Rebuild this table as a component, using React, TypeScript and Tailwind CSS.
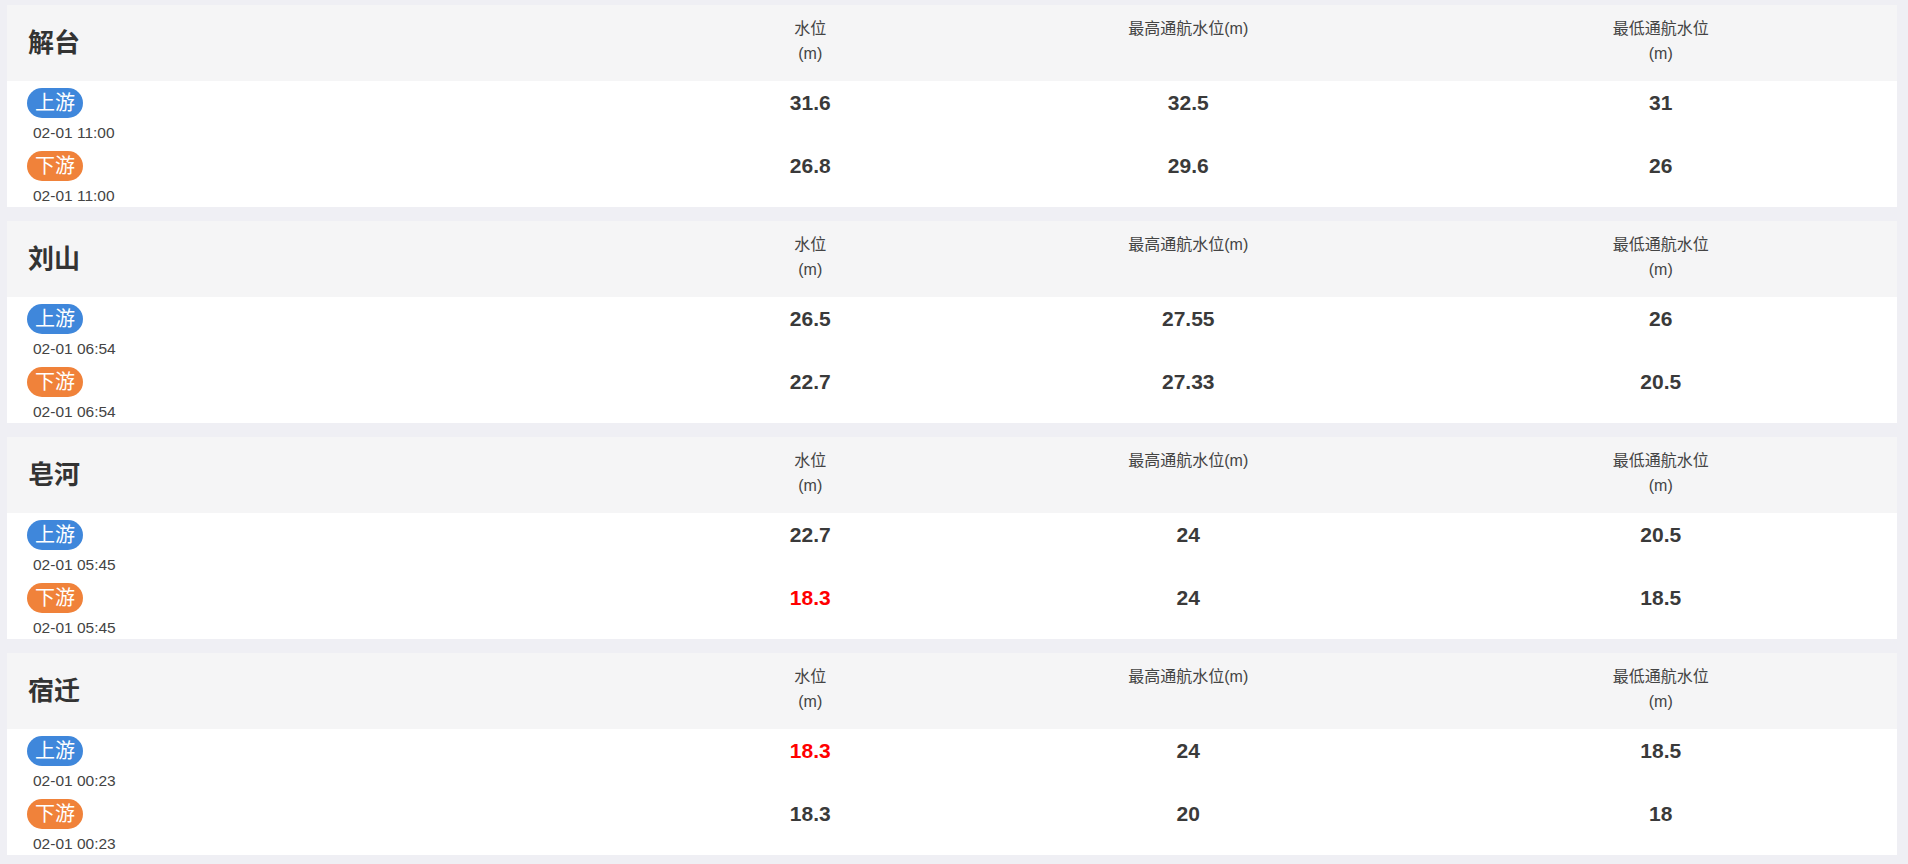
const stations = [
  {
    name: "解台",
    rows: [
      { side: "上游", time: "02-01 11:00", level: "31.6", max: "32.5", min: "31", warn: false },
      { side: "下游", time: "02-01 11:00", level: "26.8", max: "29.6", min: "26", warn: false },
    ],
  },
  {
    name: "刘山",
    rows: [
      { side: "上游", time: "02-01 06:54", level: "26.5", max: "27.55", min: "26", warn: false },
      { side: "下游", time: "02-01 06:54", level: "22.7", max: "27.33", min: "20.5", warn: false },
    ],
  },
  {
    name: "皂河",
    rows: [
      { side: "上游", time: "02-01 05:45", level: "22.7", max: "24", min: "20.5", warn: false },
      { side: "下游", time: "02-01 05:45", level: "18.3", max: "24", min: "18.5", warn: true },
    ],
  },
  {
    name: "宿迁",
    rows: [
      { side: "上游", time: "02-01 00:23", level: "18.3", max: "24", min: "18.5", warn: true },
      { side: "下游", time: "02-01 00:23", level: "18.3", max: "20", min: "18", warn: false },
    ],
  },
];

const cols = "grid grid-cols-[35%_15%_25%_25%]";

function StationCard({ station }: { station: (typeof stations)[number] }) {
  return (
    <div className="bg-white">
      <div className={`${cols} h-[76px] bg-[#f5f5f6] text-[16px] leading-[25px] text-[#444]`}>
        <div className="flex items-center pl-[21px] text-[26px] font-bold text-[#333]">{station.name}</div>
        <div className="pt-[11px] text-center">
          水位
          <br />
          (m)
        </div>
        <div className="pt-[11px] text-center">最高通航水位(m)</div>
        <div className="pt-[11px] text-center">
          最低通航水位
          <br />
          (m)
        </div>
      </div>
      <div>
        {station.rows.map((r, i) => (
          <div key={i} className={`${cols} h-[63px]`}>
            <div className="pl-[20px] pt-[7px]">
              <span
                className={`inline-flex h-[30px] items-center rounded-full px-[8px] text-[20px] text-white ${
                  r.side === "上游" ? "bg-[#3f87db]" : "bg-[#f0823a]"
                }`}
              >
                {r.side}
              </span>
              <div className="ml-[6px] mt-[3px] text-[15.5px] leading-[23px] text-[#444]">{r.time}</div>
            </div>
            <div className="pt-[7px]">
              <div
                className={`flex h-[30px] items-center justify-center text-[21px] font-bold ${
                  r.warn ? "text-[#ff0000]" : "text-[#3a3a3a]"
                }`}
              >
                {r.level}
              </div>
            </div>
            <div className="pt-[7px]">
              <div className="flex h-[30px] items-center justify-center text-[21px] font-bold text-[#3a3a3a]">
                {r.max}
              </div>
            </div>
            <div className="pt-[7px]">
              <div className="flex h-[30px] items-center justify-center text-[21px] font-bold text-[#3a3a3a]">
                {r.min}
              </div>
            </div>
          </div>
        ))}
      </div>
    </div>
  );
}

export default function App() {
  return (
    <div
      className="min-h-screen bg-[#efeff4] pb-[9px] pt-[5px] pl-[7px] pr-[11px]"
      style={{ fontFamily: '"Liberation Sans", Arial, "Noto Sans CJK SC", sans-serif' }}
    >
      <div className="flex flex-col gap-[14px]">
        {stations.map((s) => (
          <StationCard key={s.name} station={s} />
        ))}
      </div>
    </div>
  );
}
